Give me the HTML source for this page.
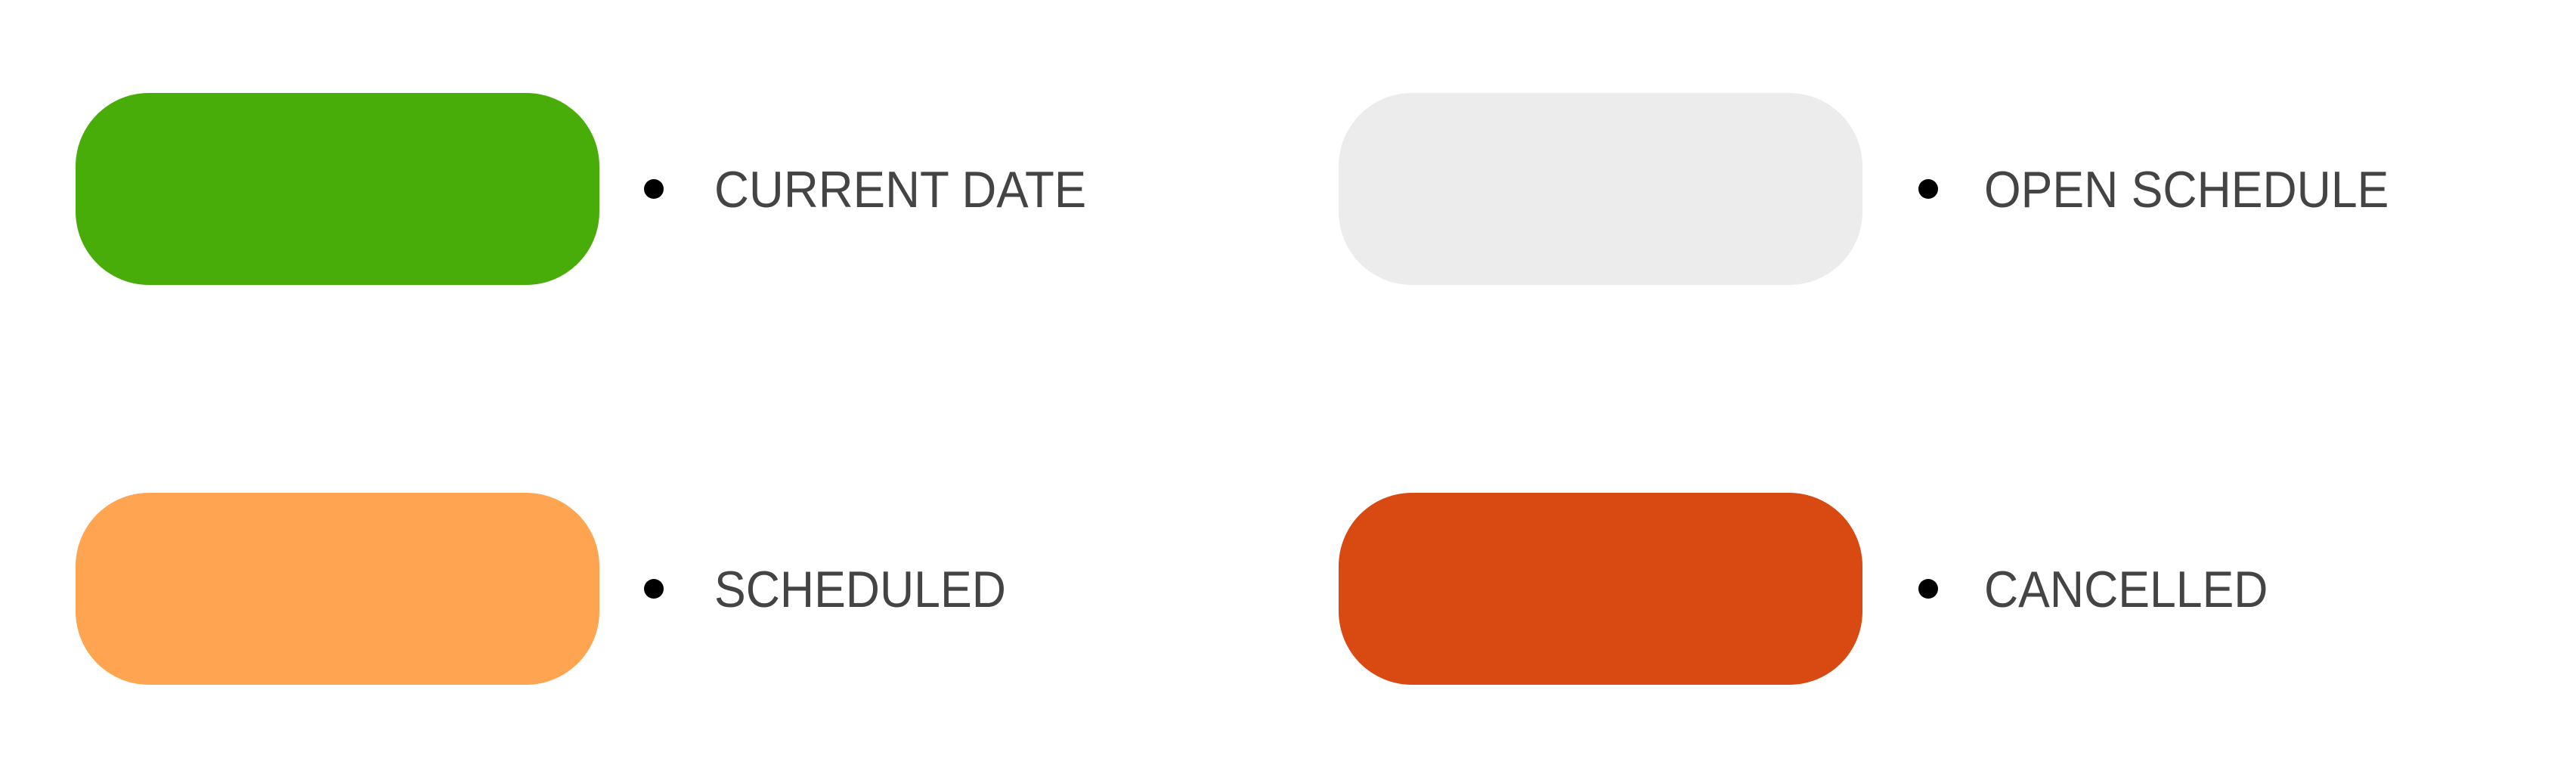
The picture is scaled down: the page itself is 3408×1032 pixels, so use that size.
<!DOCTYPE html>
<html><head><style>
html,body{margin:0;padding:0;background:#fff;width:3408px;height:1032px;overflow:hidden;position:relative}
.r{position:absolute;width:693px;height:254px;border-radius:97px}
.d{position:absolute;width:26px;height:26px;border-radius:50%;background:#000}
.t{position:absolute;font-family:"Liberation Sans",sans-serif;font-size:68px;line-height:68px;color:#444;white-space:nowrap;transform:scaleX(0.92);transform-origin:left top}
</style></head><body>
<div class="r" style="left:100px;top:123px;background:#49ad09"></div>
<div class="d" style="left:852px;top:237px"></div>
<div class="t" style="left:945px;top:217px;transform:scaleX(0.935)">CURRENT DATE</div>

<div class="r" style="left:1771px;top:123px;background:#ececec"></div>
<div class="d" style="left:2538px;top:237px"></div>
<div class="t" style="left:2625px;top:217px">OPEN SCHEDULE</div>

<div class="r" style="left:100px;top:652px;background:#ffa552"></div>
<div class="d" style="left:852px;top:766px"></div>
<div class="t" style="left:945px;top:746px">SCHEDULED</div>

<div class="r" style="left:1771px;top:652px;background:#d94a13"></div>
<div class="d" style="left:2538px;top:766px"></div>
<div class="t" style="left:2625px;top:746px">CANCELLED</div>
</body></html>
